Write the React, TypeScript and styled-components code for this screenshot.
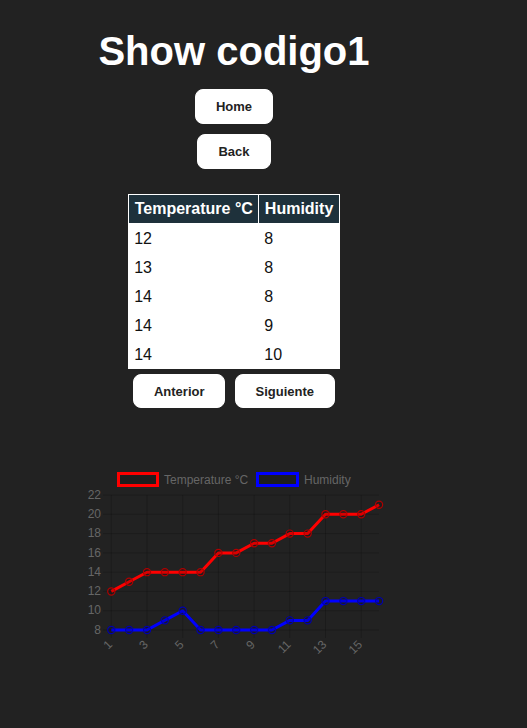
import styled, { createGlobalStyle } from "styled-components";

const GlobalStyle = createGlobalStyle`
  html, body {
    margin: 0;
    padding: 0;
    background-color: #222222;
    font-family: "Liberation Sans", Arial, sans-serif;
  }
`;

const temps = [12, 13, 14, 14, 14, 14, 16, 16, 17, 17, 18, 18, 20, 20, 20, 21];
const hums = [8, 8, 8, 9, 10, 8, 8, 8, 8, 8, 9, 9, 11, 11, 11, 11];
const rows = [
  { t: 12, h: 8 },
  { t: 13, h: 8 },
  { t: 14, h: 8 },
  { t: 14, h: 9 },
  { t: 14, h: 10 },
];

// chart area in page coordinates, svg origin is (OX, OY)
const OX = 74;
const OY = 460;
const xAt = (i: number) => 111.3 + i * 17.85 - OX;
const yAt = (v: number) => 630 - (v - 8) * 9.64 - OY;

const Chart = () => {
  const yTicks = [8, 10, 12, 14, 16, 18, 20, 22];
  const xTicks = [0, 2, 4, 6, 8, 10, 12, 14];
  const line = (data: number[]) =>
    data.map((v, i) => `${xAt(i).toFixed(1)},${yAt(v).toFixed(1)}`).join(" ");

  return (
    <ChartSvg width={320} height={210} viewBox="0 0 320 210">
      {yTicks.map((v) => (
        <line
          key={"h" + v}
          x1={103 - OX}
          x2={379 - OX}
          y1={yAt(v)}
          y2={yAt(v)}
          stroke="rgba(0,0,0,0.18)"
          strokeWidth={1}
        />
      ))}
      {xTicks.map((i) => (
        <line
          key={"v" + i}
          x1={xAt(i)}
          x2={xAt(i)}
          y1={yAt(22)}
          y2={638 - OY}
          stroke="rgba(0,0,0,0.18)"
          strokeWidth={1}
        />
      ))}
      {yTicks.map((v) => (
        <AxisText key={"yl" + v} x={101 - OX} y={yAt(v) + 0.5} textAnchor="end" dominantBaseline="middle">
          {v}
        </AxisText>
      ))}
      {xTicks.map((i) => (
        <AxisText
          key={"xl" + i}
          textAnchor="end"
          dominantBaseline="middle"
          transform={`translate(${xAt(i) - 0.5}, ${643 - OY}) rotate(-45)`}
        >
          {i + 1}
        </AxisText>
      ))}

      <rect x={118.5 - OX} y={473.5 - OY} width={39} height={12} fill="rgba(0,0,0,0.1)" stroke="#ff0000" strokeWidth={3} />
      <AxisText x={164 - OX} y={484 - OY}>Temperature °C</AxisText>
      <rect x={257.5 - OX} y={473.5 - OY} width={40} height={12} fill="rgba(0,0,0,0.1)" stroke="#0000ff" strokeWidth={3} />
      <AxisText x={304 - OX} y={484 - OY}>Humidity</AxisText>

      <polyline points={line(temps)} fill="none" stroke="#ff0000" strokeWidth={3} strokeLinejoin="round" />
      <polyline points={line(hums)} fill="none" stroke="#0000ff" strokeWidth={3} strokeLinejoin="round" />
      {temps.map((v, i) => (
        <circle key={"tp" + i} cx={xAt(i)} cy={yAt(v)} r={3.6} fill="rgba(0,0,0,0.15)" stroke="#b00000" strokeWidth={1.2} />
      ))}
      {hums.map((v, i) => (
        <circle key={"hp" + i} cx={xAt(i)} cy={yAt(v)} r={3.6} fill="rgba(0,0,0,0.15)" stroke="#0000b0" strokeWidth={1.2} />
      ))}
    </ChartSvg>
  );
};

const App = () => {
  return (
    <>
      <GlobalStyle />
      <Page>
        <Title>Show codigo1</Title>
        <NavButton>Home</NavButton>
        <NavButton>Back</NavButton>
        <DataTable>
          <thead>
            <tr>
              <th>Temperature °C</th>
              <th>Humidity</th>
            </tr>
          </thead>
          <tbody>
            {rows.map((row, i) => (
              <tr key={i}>
                <td>{row.t}</td>
                <td>{row.h}</td>
              </tr>
            ))}
          </tbody>
        </DataTable>
        <Pager>
          <PagerButton>Anterior</PagerButton>
          <PagerButton>Siguiente</PagerButton>
        </Pager>
        <Chart />
      </Page>
    </>
  );
};

export default App;

const Page = styled.div`
  width: 468px;
  display: flex;
  flex-direction: column;
  align-items: center;
  min-height: 728px;
`;

const Title = styled.h1`
  color: #ffffff;
  font-size: 40px;
  line-height: 46px;
  font-weight: 700;
  margin: 28px 0 15px;
`;

const NavButton = styled.button`
  font-family: "Liberation Sans", Arial, sans-serif;
  background-color: #ffffff;
  color: #222222;
  font-size: 13px;
  font-weight: 700;
  height: 35px;
  padding: 0 20px;
  border: 1px solid #ffffff;
  border-radius: 8px;
  margin-bottom: 10px;
`;

const DataTable = styled.table`
  margin-top: 15px;
  border-collapse: collapse;
  background-color: #ffffff;
  font-family: "Liberation Sans", Arial, sans-serif;

  th {
    background-color: #1e313b;
    color: #ffffff;
    font-size: 16px;
    font-weight: 700;
    line-height: 19px;
    padding: 4px 5.5px 5px;
    border: 1px solid #ffffff;
    text-align: left;
  }

  td {
    color: #111111;
    font-size: 16px;
    line-height: 19px;
    padding: 5px 5.5px;
    text-align: left;
  }
`;

const Pager = styled.div`
  display: flex;
  gap: 10px;
  margin-top: 5px;
`;

const PagerButton = styled(NavButton)`
  height: 34px;
  margin-bottom: 0;
  padding: 0 19.5px;
`;

const ChartSvg = styled.svg`
  display: block;
  margin-top: 52px;
`;

const AxisText = styled.text`
  font-family: "Liberation Sans", Arial, sans-serif;
  font-size: 12px;
  fill: #666666;
`;
